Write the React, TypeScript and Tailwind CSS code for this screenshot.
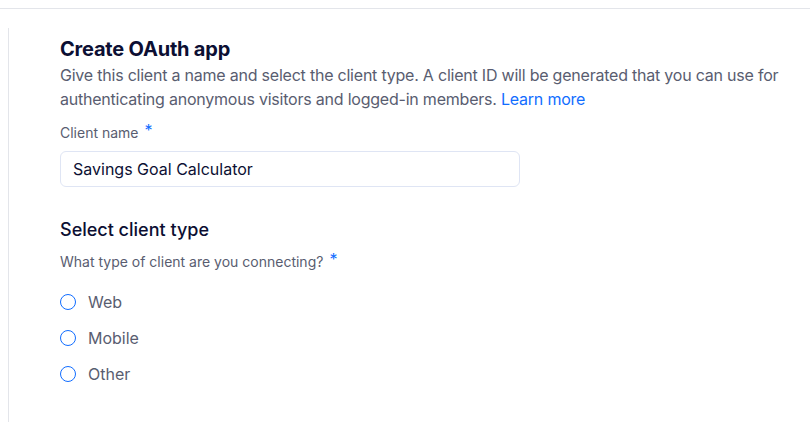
import React, { useState } from 'react';

const types = ['Web', 'Mobile', 'Other'];

export default function App() {
    const [name, setName] = useState('Savings Goal Calculator');
    const [type, setType] = useState<string | null>(null);

    return (
        <div className="w-[810px] h-[422px] bg-white overflow-hidden font-['Inter',sans-serif]">
            <div className="h-[8px]" />
            <div className="border-t border-[#e3e5ea] pt-[19px] pl-[8px]">
                <div className="border-l border-[#e3e5ea] h-[400px] pl-[51px] pt-[8px]">
                    {/* Header */}
                    <h1 className="text-[20px] leading-[26px] font-bold text-[#0c0f33] tracking-[-0.2px]">Create OAuth app</h1>
                    <p className="mt-[1px] text-[16px] leading-[24px] text-[#595d70] tracking-[-0.22px]">
                        Give this client a name and select the client type. A client ID will be generated that you can use for authenticating anonymous visitors and logged-in members.{' '}
                        <a href="#" className="text-[#116dff]">Learn more</a>
                    </p>

                    {/* Client name */}
                    <label className="mt-[12px] flex items-start gap-[6px] text-[14px] leading-[20px] text-[#595d70]">
                        Client name <span className="text-[#116dff] text-[16px] leading-[14px]">*</span>
                    </label>
                    <input
                        value={name}
                        onChange={(e) => setName(e.target.value)}
                        className="mt-[8px] w-[460px] h-[36px] px-[12px] rounded-[6px] border border-[#dfe5f4] text-[16px] text-[#0c0f33] outline-none"
                    />

                    {/* Client type */}
                    <h2 className="mt-[31px] text-[18px] leading-[24px] font-medium text-[#0c0f33]">Select client type</h2>
                    <div className="mt-[10px] flex items-start gap-[6px] text-[14px] leading-[20px] text-[#595d70]">
                        What type of client are you connecting? <span className="text-[#116dff] text-[16px] leading-[14px]">*</span>
                    </div>

                    <div className="mt-[18px] flex flex-col gap-[12px]">
                        {types.map((t) => (
                            <label key={t} className="flex items-center gap-[12px] h-[24px] cursor-pointer" onClick={() => setType(t)}>
                                <span className="w-[16px] h-[16px] rounded-full border border-[#116dff] flex items-center justify-center">
                                    {type === t && <span className="w-[8px] h-[8px] rounded-full bg-[#116dff]" />}
                                </span>
                                <span className="text-[16px] text-[#595d70]">{t}</span>
                            </label>
                        ))}
                    </div>
                </div>
            </div>
        </div>
    );
}
